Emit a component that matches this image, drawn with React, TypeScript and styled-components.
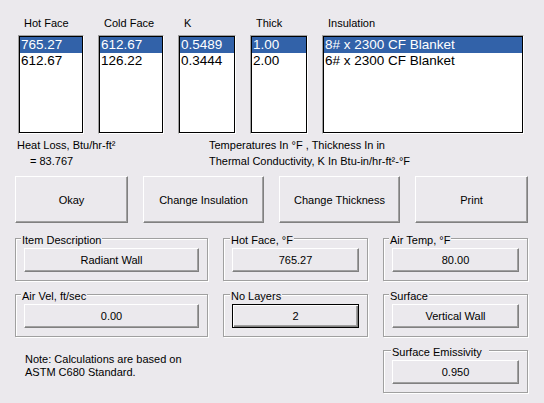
import React from 'react';
import styled, { createGlobalStyle } from 'styled-components';

const GlobalStyle = createGlobalStyle`
  html, body {
    margin: 0;
    background: #ebe9ed;
    font-family: "Liberation Sans", Arial, sans-serif;
    font-size: 11px;
    color: #000;
  }
`;

const Dialog = styled.div`
  width: 544px;
  height: 403px;
  box-sizing: border-box;
  padding: 17px 16px 0 15px;
  background: #ebe9ed;
`;

const ListsRow = styled.div`
  display: flex;
  gap: 14px;
  margin-left: 3px;
`;

const ListColumn = styled.div<{ $width: number }>`
  display: flex;
  flex-direction: column;
  width: ${props => props.$width}px;
`;

const ListLabel = styled.div`
  line-height: 13px;
  padding-left: 6px;
  margin-bottom: 5px;
`;

const Well = styled.div`
  height: 99px;
  box-sizing: border-box;
  border: 1px solid;
  border-color: #a0a0a0 #ffffff #ffffff #a0a0a0;
`;

const ListBody = styled.div`
  height: 100%;
  box-sizing: border-box;
  border: 1px solid #000;
  background: #fff;
`;

const ListItem = styled.div<{ $selected?: boolean }>`
  height: 16px;
  line-height: 16px;
  font-size: 13.5px;
  padding-left: 1px;
  white-space: nowrap;
  background: ${props => (props.$selected ? '#3262a9' : 'transparent')};
  color: ${props => (props.$selected ? '#fff' : '#000')};
`;

const Info = styled.div`
  display: grid;
  grid-template-columns: 192px auto;
  margin: 3px 0 0 2px;
  line-height: 16px;
`;

const InfoCell = styled.div<{ $indent?: number }>`
  padding-left: ${props => props.$indent || 0}px;
  white-space: nowrap;
`;

const ButtonRow = styled.div`
  display: flex;
  gap: 15px;
  margin-top: 7px;
`;

const CommandButton = styled.button<{ $width: number }>`
  width: ${props => props.$width}px;
  height: 47px;
  padding: 0;
  font: inherit;
  color: #000;
  background: #ebe9ed;
  border: 1px solid;
  border-color: #ffffff #808080 #808080 #ffffff;
  box-shadow: inset -1px -1px 0 #a0a0a0;
`;

const Groups = styled.div`
  display: grid;
  grid-template-columns: 193px 145px 145px;
  column-gap: 15px;
  row-gap: 13px;
  margin-top: 15px;
`;

const GroupBox = styled.div`
  display: flex;
  flex-direction: column;
  padding: 0 8px 8px;
  border: 1px solid #a0a0a0;
  box-shadow: inset 1px 1px 0 #fff, 1px 1px 0 #fff;
`;

const Caption = styled.div<{ $shift?: number }>`
  align-self: flex-start;
  margin: -5px 0 1px ${props => props.$shift ?? -3}px;
  padding: 0 1px;
  line-height: 13px;
  background: #ebe9ed;
  white-space: pre;
`;

const FieldButton = styled.button<{ $default?: boolean }>`
  height: 24px;
  padding: 0;
  font: inherit;
  color: #000;
  background: #ebe9ed;
  border: 1px solid;
  border-color: ${props =>
    props.$default ? '#000' : '#ffffff #808080 #808080 #ffffff'};
  box-shadow: ${props =>
    props.$default
      ? 'inset 1px 1px 0 #fff, inset -1px -1px 0 #808080, inset -2px -2px 0 #a0a0a0'
      : 'inset -1px -1px 0 #a0a0a0'};
`;

const Note = styled.div`
  grid-column: 1 / 3;
  padding: 3px 0 0 10px;
  line-height: 13px;
`;

const lists = [
  { label: 'Hot Face', width: 66, items: ['765.27', '612.67'] },
  { label: 'Cold Face', width: 66, items: ['612.67', '126.22'] },
  { label: 'K', width: 58, items: ['0.5489', '0.3444'] },
  { label: 'Thick', width: 58, items: ['1.00', '2.00'] },
  { label: 'Insulation', width: 202, items: ['8# x 2300 CF Blanket', '6# x 2300 CF Blanket'] },
];

const commands = [
  { label: 'Okay', width: 113 },
  { label: 'Change Insulation', width: 121 },
  { label: 'Change Thickness', width: 121 },
  { label: 'Print', width: 113 },
];

const Field = ({ caption, value, isDefault, shift }: {
  caption: string;
  value: string;
  isDefault?: boolean;
  shift?: number;
}): JSX.Element => (
  <GroupBox>
    <Caption $shift={shift}>{caption}</Caption>
    <FieldButton $default={isDefault}>{value}</FieldButton>
  </GroupBox>
);

export default function App(): JSX.Element {
  return (
    <Dialog>
      <GlobalStyle />
      <ListsRow>
        {lists.map(list => (
          <ListColumn key={list.label} $width={list.width}>
            <ListLabel>{list.label}</ListLabel>
            <Well>
              <ListBody>
                {list.items.map((item, i) => (
                  <ListItem key={item} $selected={i === 0}>{item}</ListItem>
                ))}
              </ListBody>
            </Well>
          </ListColumn>
        ))}
      </ListsRow>

      <Info>
        <InfoCell>Heat Loss, Btu/hr-ft²</InfoCell>
        <InfoCell>Temperatures In °F , Thickness In in</InfoCell>
        <InfoCell $indent={13}>= 83.767</InfoCell>
        <InfoCell>Thermal Conductivity, K In Btu-in/hr-ft²-°F</InfoCell>
      </Info>

      <ButtonRow>
        {commands.map(c => (
          <CommandButton key={c.label} $width={c.width}>{c.label}</CommandButton>
        ))}
      </ButtonRow>

      <Groups>
        <Field caption="Item Description" value="Radiant Wall" />
        <Field caption="Hot Face, °F" value="765.27" shift={-2} />
        <Field caption="Air Temp, °F" value="80.00" shift={-3} />
        <Field caption="Air Vel, ft/sec" value="0.00" />
        <Field caption="No Layers" value="2" isDefault shift={-2} />
        <Field caption="Surface" value="Vertical Wall" shift={-3} />
        <Note>
          Note: Calculations are based on
          <br />
          ASTM C680 Standard.
        </Note>
        <Field caption={'Surface Emissivity  '} value="0.950" shift={-1} />
      </Groups>
    </Dialog>
  );
}
